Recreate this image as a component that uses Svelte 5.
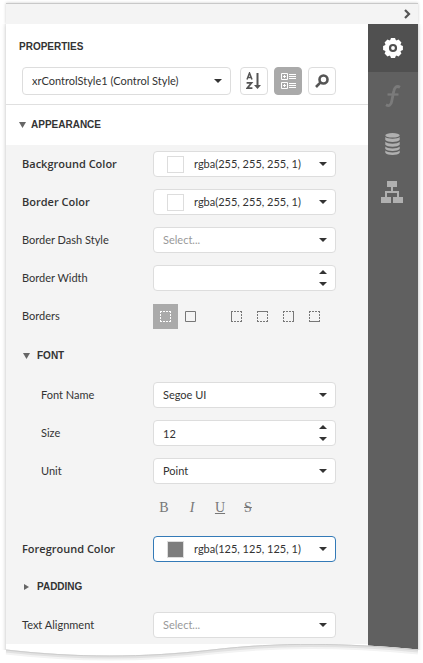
<script>
  let styleName = $state('xrControlStyle1 (Control Style)');
  let borderWidth = $state('');
  let size = $state('12');
  let open = $state(true);

  const step = (value, by) => String((Number(value) || 0) + by);

  const sides = [
    { name: 'Left', d: 'M.5 0V11' },
    { name: 'Top', d: 'M0 .5H11' },
    { name: 'Right', d: 'M10.5 0V11' },
    { name: 'Bottom', d: 'M0 10.5H11' }
  ];
  const dashed = 'M0 .5H2M3 .5H5M6 .5H8M9 .5H11M0 10.5H2M3 10.5H5M6 10.5H8M9 10.5H11M.5 0V2M.5 3V5M.5 6V8M.5 9V11M10.5 0V2M10.5 3V5M10.5 6V8M10.5 9V11';
  const teeth = Array.from({ length: 8 }, (_, i) => i * 45);
</script>

{#snippet caret()}
  <svg class="caret" width="8" height="4" viewBox="0 0 8 4" aria-hidden="true"><path d="M0 0H8L4 4Z" /></svg>
{/snippet}

{#snippet picker(id, label, value, kind, color)}
  <div class="row">
    <label for={id} class:strong={color}>{label}</label>
    <div class="field">
      {#if color}<span class="swatch" style:background={color}></span>{/if}
      <select {id} class={kind}><option>{value}</option></select>
      {@render caret()}
    </div>
  </div>
{/snippet}

{#snippet spinner(up, down, label)}
  <span class="spin">
    <button type="button" aria-label="Increase {label}" onclick={up}><svg width="8" height="4" viewBox="0 0 8 4"><path d="M0 4H8L4 0Z" /></svg></button>
    <button type="button" aria-label="Decrease {label}" onclick={down}><svg width="8" height="4" viewBox="0 0 8 4"><path d="M0 0H8L4 4Z" /></svg></button>
  </span>
{/snippet}

<div class="panel">
  <header class="bar">
    <button type="button" aria-label="Collapse panel">
      <svg width="7" height="10" viewBox="0 0 7 10"><path d="M1 1L5 5L1 9" fill="none" stroke="#555" stroke-width="2.2" /></svg>
    </button>
  </header>
  <div class="body">
    <main>
      <section class="top">
        <h1>PROPERTIES</h1>
        <div class="tools">
          <div class="field big">
            <select aria-label="Component" bind:value={styleName}><option>xrControlStyle1 (Control Style)</option></select>
            {@render caret()}
          </div>
          <button type="button" aria-label="Sort alphabetically">
            <svg width="16" height="18" viewBox="0 0 16 18" fill="none" stroke="#555">
              <path d="M1 7.5L3.5 1L6 7.5M1.8 5.5H5.2" stroke-width="1.5" />
              <path d="M.6 10.8H5.6L1.2 16.2H6.4" stroke-width="1.7" />
              <path d="M11.5 1V14" stroke-width="2" /><path d="M8 13H15L11.5 17Z" fill="#555" stroke="none" />
            </svg>
          </button>
          <button type="button" class="on" aria-label="Group by category" aria-pressed="true">
            <svg width="15" height="16" viewBox="0 0 15 16" fill="none" stroke="#fff">
              <path d="M.5 .5H6.5V6.5H.5ZM2 3.5H5M3.5 2V5M.5 9.5H6.5V15.5H.5ZM2 12.5H5M3.5 11V14M8 1.5H15M8 3.5H15M8 5.5H15M8 10.5H15M8 12.5H15M8 14.5H15" />
            </svg>
          </button>
          <button type="button" aria-label="Search properties">
            <svg width="14" height="14" viewBox="0 0 14 14" fill="none" stroke="#555"><circle cx="8.5" cy="5.5" r="4" stroke-width="2.6" /><path d="M5.8 8.2L1 13" stroke-width="2.6" /></svg>
          </button>
        </div>
      </section>

      <button type="button" class="group lead" aria-expanded={open} onclick={() => (open = !open)}>
        <svg width="7" height="6" viewBox="0 0 7 6"><path d="M0 0H7L3.5 6Z" /></svg>APPEARANCE
      </button>

      {#if open}
        <section class="props">
          {@render picker('background', 'Background Color', 'rgba(255, 255, 255, 1)', 'color', '#fff')}
          {@render picker('border', 'Border Color', 'rgba(255, 255, 255, 1)', 'color', '#fff')}
          {@render picker('dash', 'Border Dash Style', 'Select...', 'empty')}
          <div class="row">
            <label for="width">Border Width</label>
            <div class="field">
              <input id="width" bind:value={borderWidth} />
              {@render spinner(() => (borderWidth = step(borderWidth, 1)), () => (borderWidth = step(borderWidth, -1)), 'border width')}
            </div>
          </div>
          <div class="row">
            <span class="name" id="borders">Borders</span>
            <div class="borders" role="group" aria-labelledby="borders">
              <button type="button" class="on" aria-label="No borders"><svg width="11" height="11" viewBox="0 0 11 11"><path d={dashed} /></svg></button>
              <button type="button" aria-label="All borders"><svg width="11" height="11" viewBox="0 0 11 11"><path d="M.5 .5H10.5V10.5H.5Z" /></svg></button>
              <span class="sides">
                {#each sides as side}
                  <button type="button" aria-label={side.name}><svg width="11" height="11" viewBox="0 0 11 11"><path d={dashed} /><path d={side.d} /></svg></button>
                {/each}
              </span>
            </div>
          </div>

          <button type="button" class="group font" aria-expanded="true"><svg width="7" height="6" viewBox="0 0 7 6"><path d="M0 0H7L3.5 6Z" /></svg>FONT</button>
          <div class="nested">
            {@render picker('font', 'Font Name', 'Segoe UI', '')}
            <div class="row">
              <label for="size">Size</label>
              <div class="field">
                <input id="size" bind:value={size} />
                {@render spinner(() => (size = step(size, 1)), () => (size = step(size, -1)), 'size')}
              </div>
            </div>
            {@render picker('unit', 'Unit', 'Point', '')}
          </div>
          <div class="format" role="group" aria-label="Font style">
            <button type="button" aria-label="Bold">B</button>
            <button type="button" aria-label="Italic"><i>I</i></button>
            <button type="button" aria-label="Underline"><u>U</u></button>
            <button type="button" aria-label="Strikeout"><s>S</s></button>
          </div>

          {@render picker('foreground', 'Foreground Color', 'rgba(125, 125, 125, 1)', 'color focused', '#7d7d7d')}
          <button type="button" class="group" aria-expanded="false"><svg width="7" height="6" viewBox="0 0 7 6"><path d="M1 0L6 3L1 6Z" /></svg>PADDING</button>
          {@render picker('align', 'Text Alignment', 'Select...', 'empty')}
        </section>
      {/if}
    </main>

    <nav aria-label="Panels">
      <button type="button" class="active" aria-label="Properties">
        <svg width="20" height="20" viewBox="-10 -10 20 20" fill="#fff">
          {#each teeth as angle}<path d="M-3.2 -7L-2 -9.9H2L3.2 -7Z" transform="rotate({angle})" />{/each}
          <circle r="8" /><circle r="3" fill="#fff" stroke="#505050" stroke-width="2.2" />
        </svg>
      </button>
      <button type="button" aria-label="Expressions">
        <svg width="16" height="22" viewBox="0 0 16 22" fill="none" stroke="#7b7b7b"><path d="M15 2.2C11.5 .2 9.4 2.6 8.8 6L6.8 16C6.1 20.3 4 21.5 1 19.8" stroke-width="2.8" /><path d="M2.5 9.5H13.5" stroke-width="2.2" /></svg>
      </button>
      <button type="button" class="data" aria-label="Fields">
        <svg width="15" height="22" viewBox="0 0 15 22" fill="#b0b0b0">
          <ellipse cx="7.5" cy="2.3" rx="7.2" ry="2.3" />
          <path d="M.3 4C2 6.2 13 6.2 14.7 4V7C13 9.6 2 9.6 .3 7ZM.3 8.8C2 11.4 13 11.4 14.7 8.8V11.8C13 14.4 2 14.4 .3 11.8ZM.3 13.5C2 16.1 13 16.1 14.7 13.5V16C13 18.6 2 18.6 .3 16ZM.3 17.6C2 20.2 13 20.2 14.7 17.6V19.7C13 22.7 2 22.7 .3 19.7Z" />
        </svg>
      </button>
      <button type="button" class="data" aria-label="Report explorer">
        <svg width="22" height="22" viewBox="0 0 22 22" fill="#b0b0b0"><path d="M6 0H16V6H6ZM0 16H10V22H0ZM12 16H22V22H12ZM10 6H12V10H18V16H16V12H6V16H4V10H10Z" /></svg>
      </button>
    </nav>
  </div>
  <svg class="tear" viewBox="0 0 423 19" preserveAspectRatio="none" aria-hidden="true">
    <path class="cut" d="M0 6H6C75 14 145 14 212 6C280 -2 345 -1 418 6H423V19H0Z" />
    <path d="M6 8C75 16 145 16 212 8C280 0 345 1 418 8" stroke="#f3f3f3" stroke-width="5" fill="none" />
    <path d="M6 7C75 15 145 15 212 7C280 -1 345 0 418 7" stroke="#e2e2e2" stroke-width="3" fill="none" />
    <path d="M6 6C75 14 145 14 212 6C280 -2 345 -1 418 6" stroke="#cdcdcd" stroke-width="1" fill="none" />
  </svg>
</div>

<style>
  :global(body) { background: #fff; }
  .panel, .panel * { box-sizing: border-box; }
  .panel {
    position: relative;
    padding: 3px 5px 6px 6px;
    overflow: hidden;
    font: 11px/16px Lato, "Open Sans", sans-serif;
    color: #333;
  }
  button, select, input { font: inherit; color: inherit; margin: 0; padding: 0; border: 0; background: none; outline: 0; }
  button { display: flex; align-items: center; justify-content: center; flex: none; cursor: pointer; }
  svg { display: block; flex: none; }
  .bar {
    display: flex;
    justify-content: flex-end;
    height: 21px;
    padding-right: 7px;
    border-top: 1px solid #c8c8c8;
    background: #f4f4f4;
    box-shadow: 0 0 3px #ccc;
  }
  .body { position: relative; display: flex; box-shadow: 0 0 4px #bbb; background: #fff; clip-path: inset(0 -6px 0 -6px); }
  main { flex: 1; min-width: 0; }
  .top { padding: 15px 32px 9px 13px; border-bottom: 1px solid #e0e0e0; }
  h1 { margin: 0 0 12px; font: bold 10px/16px "Liberation Sans", Arial, sans-serif; }
  .tools { display: flex; gap: 6px; padding-left: 3px; }
  .tools button { width: 28px; height: 28px; border: 1px solid #ddd; border-radius: 4px; }
  .tools .on { background: #aaa; border-color: #aaa; }
  .field { position: relative; flex: 1; min-width: 0; display: flex; height: 26px; }
  .big { height: 28px; margin-right: 3px; }
  .field select, .field input {
    appearance: none;
    width: 100%;
    height: 100%;
    padding: 0 24px 0 9px;
    border: 1px solid #ddd;
    border-radius: 4px;
    background: #fff;
  }
  .field select.color { padding-left: 40px; }
  .field select.empty { color: #999; }
  .field select.focused { border-color: #337ab7; }
  .swatch { position: absolute; left: 14px; top: 5px; width: 17px; height: 17px; border: 1px solid #ddd; pointer-events: none; }
  .caret { position: absolute; right: 9px; top: 11px; fill: #333; pointer-events: none; }
  .big .caret { top: 12px; }
  .spin { position: absolute; right: 4px; top: 1px; fill: #333; }
  .spin button { width: 18px; height: 12px; }
  .group {
    width: 100%;
    height: 38px;
    padding-left: 17px;
    justify-content: flex-start;
    gap: 7px;
    font: bold 10px/16px "Liberation Sans", Arial, sans-serif;
    fill: #666;
  }
  .group.lead { height: 40px; padding-left: 13px; gap: 5px; }
  .group.font { height: 41px; }
  .props { background: #f4f4f4; margin-bottom: 13px; }
  .row { display: flex; align-items: center; height: 38px; padding: 0 32px 0 16px; }
  label, .name { width: 131px; flex: none; }
  .nested label, .nested :global(label) { padding-left: 19px; }
  .strong { font-family: "Open Sans", sans-serif; font-weight: 600; }
  .borders { display: flex; flex: 1; }
  .borders button { width: 25px; height: 25px; }
  .borders path { fill: none; stroke: #777; }
  .borders .on { background: #aaa; }
  .borders .on path { stroke: #fff; }
  .sides { display: flex; gap: 1px; margin-left: 21px; }
  .format { display: flex; height: 40px; padding: 4px 0 8px 144px; }
  .format button { width: 28px; font: 14px/18px "Liberation Serif", serif; color: #777; }
  nav { width: 50px; flex: none; background: #606060; }
  nav button { width: 50px; height: 48px; }
  nav .active { background: #505050; }
  nav .data { padding-right: 2px; }
  .tear { position: absolute; left: 0; bottom: 0; width: 100%; height: 19px; }
  .cut { fill: #fff; }
</style>
